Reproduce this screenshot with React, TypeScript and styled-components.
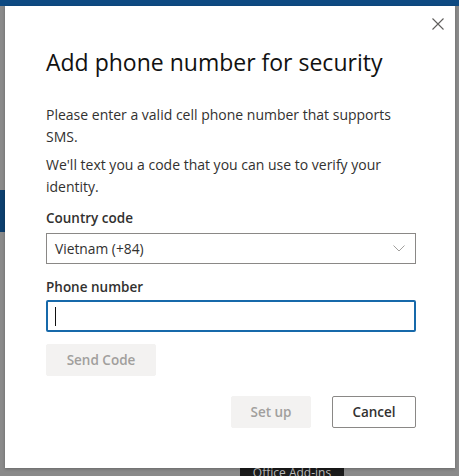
import React from "react";
import styled, { createGlobalStyle } from "styled-components";

const Global = createGlobalStyle`
  html, body { margin: 0; padding: 0; }
  body { font-family: "Open Sans", "Noto Sans", sans-serif; }
  * { box-sizing: border-box; }
`;

const Page = styled.div`
  position: relative;
  width: 459px;
  height: 476px;
  overflow: hidden;
  background: #8a8a8a;
  display: flex;
  flex-direction: column;
`;

const TopBar = styled.div`
  height: 6px;
  background: #0e4a82;
  flex: none;
`;

const BackBody = styled.div`
  flex: 1;
  display: flex;
  flex-direction: column;
  padding-top: 184px;
`;

const SideBlock = styled.div`
  width: 5px;
  height: 42px;
  background: #0d3f6e;
`;

const Spacer = styled.div`
  flex: 1;
`;

const Tag = styled.div`
  margin-left: 240px;
  width: 104px;
  height: 10px;
  background: #1b1b1b;
  color: #bbbbbb;
  font-size: 12px;
  line-height: 14px;
  text-align: center;
  overflow: hidden;
`;

const Dialog = styled.div`
  position: absolute;
  top: 6px;
  left: 5px;
  width: 450px;
  height: 462px;
  background: #ffffff;
  box-shadow: 0 1px 3px rgba(0, 0, 0, 0.25);
  padding: 40px 40px 0 41px;
  display: flex;
  flex-direction: column;
  color: #323130;
`;

const CloseButton = styled.button`
  position: absolute;
  top: 6px;
  right: 5px;
  width: 24px;
  height: 24px;
  border: none;
  background: transparent;
  padding: 0;
  display: flex;
  align-items: center;
  justify-content: center;
`;

const Title = styled.h1`
  margin: 0;
  font-size: 23px;
  line-height: 32px;
  font-weight: 400;
  color: #111111;
`;

const Text = styled.p`
  margin: 0;
  font-size: 14px;
  line-height: 22px;
  color: #323130;
`;

const TextBlock = styled.div`
  margin-top: 26px;
  width: 370px;
  display: flex;
  flex-direction: column;
  gap: 6px;
`;

const Label = styled.div<{ $top: number }>`
  margin-top: ${(p) => p.$top}px;
  font-size: 13.5px;
  line-height: 20px;
  font-weight: 600;
  color: #323130;
`;

const Select = styled.div`
  margin-top: 5px;
  width: 370px;
  height: 31px;
  border: 1px solid #8a8886;
  display: flex;
  align-items: center;
  justify-content: space-between;
  padding: 0 10px 0 8px;
  font-size: 13.8px;
  color: #323130;
`;

const Input = styled.div`
  margin-top: 3px;
  width: 370px;
  height: 32px;
  border: 2px solid #1769aa;
  border-radius: 2px;
  display: flex;
  align-items: center;
  padding-left: 7px;
`;

const Caret = styled.span`
  width: 1px;
  height: 19px;
  background: #111;
`;

const Button = styled.button<{ $disabled?: boolean; $width: number }>`
  width: ${(p) => p.$width}px;
  height: 32px;
  padding: 0;
  font-family: inherit;
  font-size: 13.5px;
  font-weight: 600;
  border-radius: 2px;
  border: ${(p) => (p.$disabled ? "1px solid #f3f2f1" : "1px solid #8a8886")};
  background: ${(p) => (p.$disabled ? "#f3f2f1" : "#ffffff")};
  color: ${(p) => (p.$disabled ? "#a19f9d" : "#323130")};
`;

const SendRow = styled.div`
  margin-top: 12px;
  display: flex;
`;

const Footer = styled.div`
  margin-top: 20px;
  width: 370px;
  display: flex;
  justify-content: flex-end;
  gap: 21px;
`;

export default function App() {
  return (
    <>
      <Global />
      <Page>
        <TopBar />
        <BackBody>
          <SideBlock />
          <Spacer />
          <Tag>Office Add-ins</Tag>
        </BackBody>
        <Dialog>
          <CloseButton aria-label="Close">
            <svg width="12" height="12" viewBox="0 0 12 12">
              <path d="M0.5 0.5 L11.5 11.5 M11.5 0.5 L0.5 11.5" stroke="#605e5c" strokeWidth="1.1" fill="none" />
            </svg>
          </CloseButton>
          <Title>Add phone number for security</Title>
          <TextBlock>
            <Text>Please enter a valid cell phone number that supports SMS.</Text>
            <Text>We'll text you a code that you can use to verify your identity.</Text>
          </TextBlock>
          <Label $top={10}>Country code</Label>
          <Select>
            <span>Vietnam (+84)</span>
            <svg width="12" height="7" viewBox="0 0 12 7">
              <path d="M0.5 0.5 L6 6 L11.5 0.5" stroke="#a19f9d" strokeWidth="1" fill="none" />
            </svg>
          </Select>
          <Label $top={13}>Phone number</Label>
          <Input>
            <Caret />
          </Input>
          <SendRow>
            <Button $disabled $width={110}>Send Code</Button>
          </SendRow>
          <Footer>
            <Button $disabled $width={80}>Set up</Button>
            <Button $width={84}>Cancel</Button>
          </Footer>
        </Dialog>
      </Page>
    </>
  );
}
